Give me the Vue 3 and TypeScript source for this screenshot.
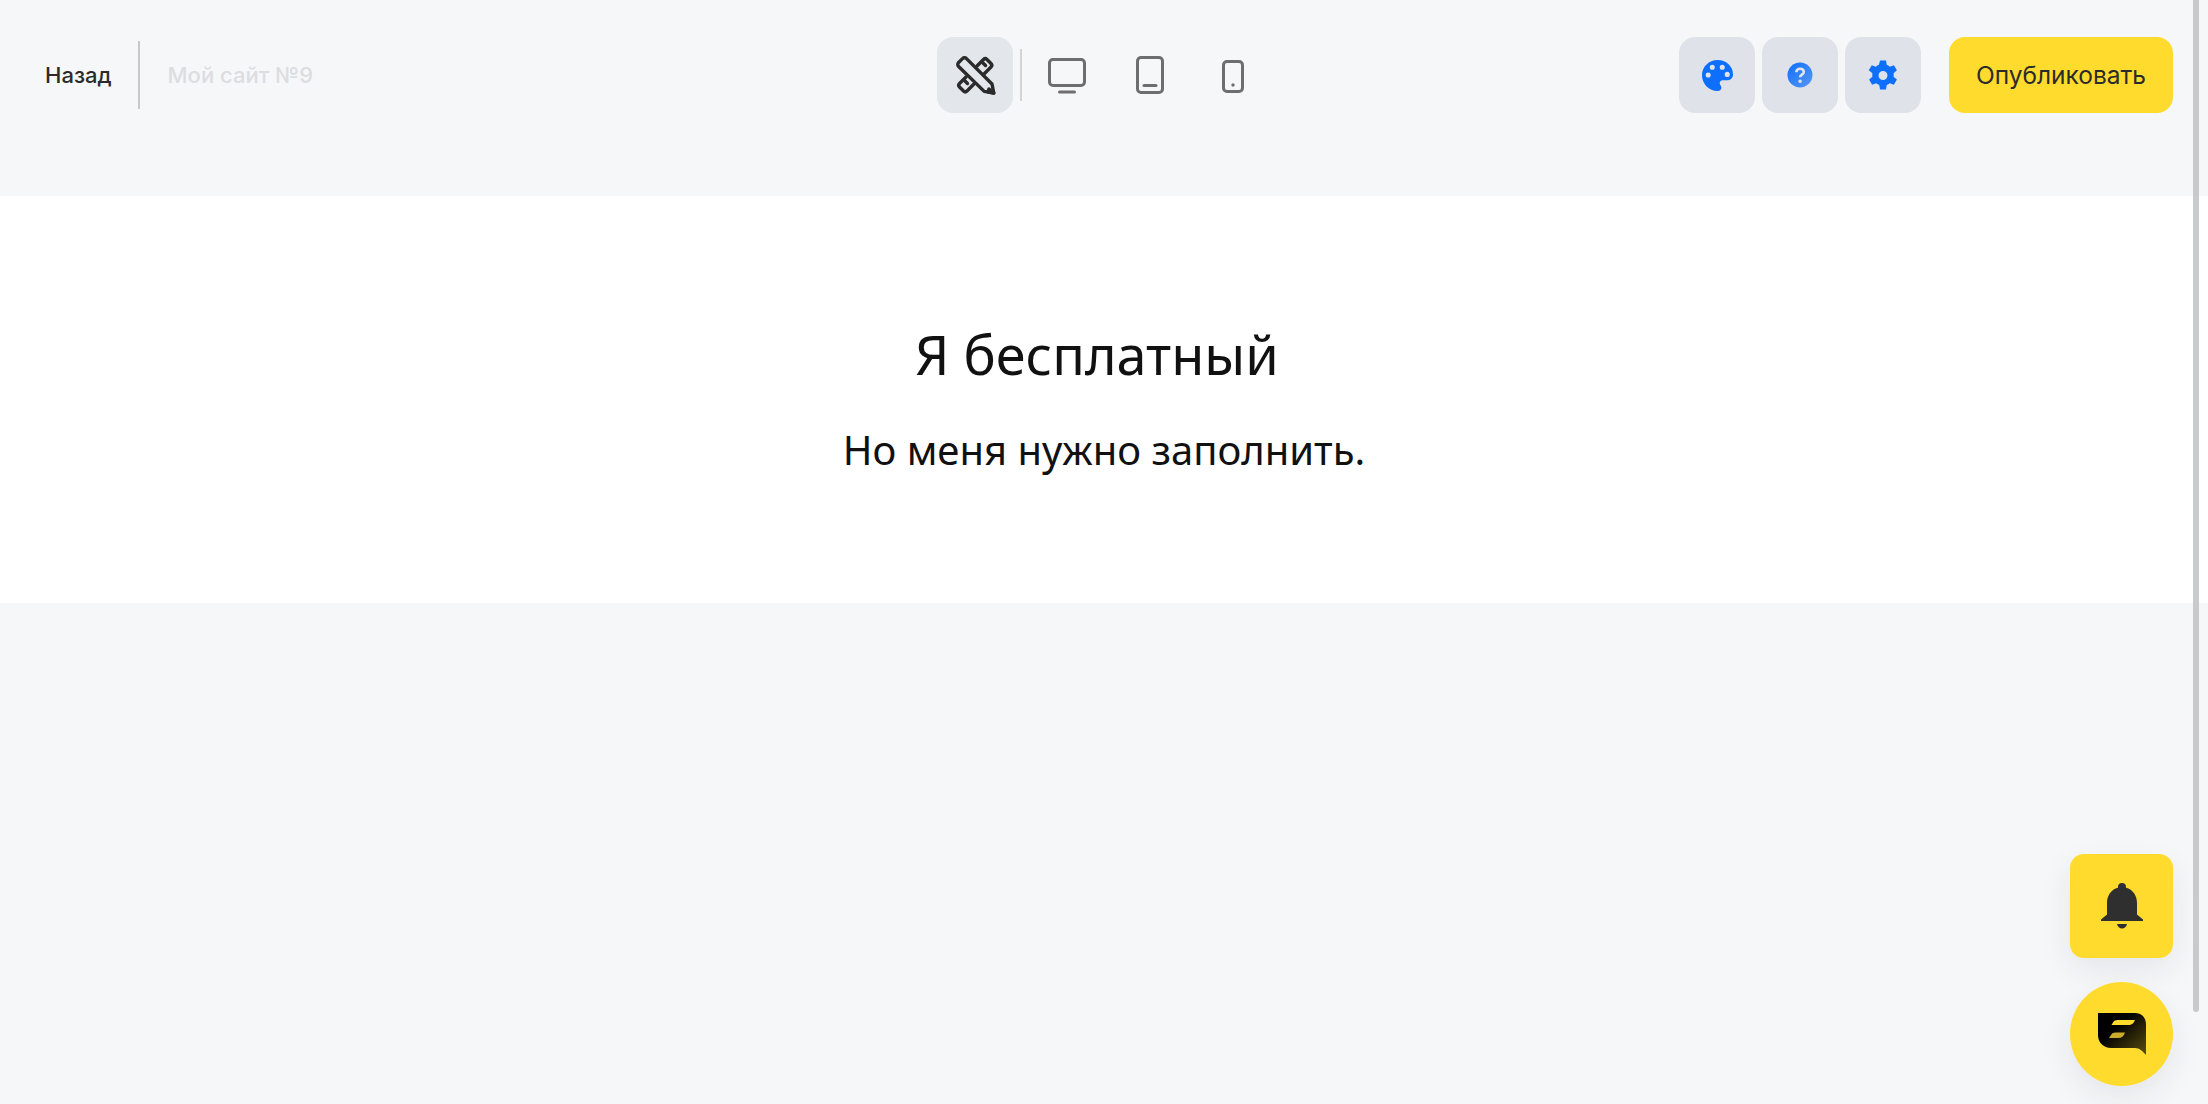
<script setup lang="ts">
const devices = ['desktop', 'tablet', 'phone']
</script>

<template>
  <div class="page">
    <header class="topbar">
      <div class="left">
        <a class="back">Назад</a>
        <span class="site-name">Мой сайт №9</span>
      </div>

      <div class="center">
        <button class="tool active" aria-label="Редактор">
          <svg width="44" height="44" viewBox="0 0 44 44" fill="none" stroke="#2b2b2b" stroke-width="3.400" stroke-linejoin="round" stroke-linecap="round">
            <path d="M5.600 9.500l3.900-3.900a2.800 2.800 0 0 1 4 0L39 31l1.800 9.100-9.600-1.700L5.600 13.500a2.800 2.800 0 0 1 0-4z" />
            <path d="M24 13l6.500-6.500a2.500 2.500 0 0 1 3.500 0l4 4a2.500 2.500 0 0 1 0 3.500L31.500 20.500" />
            <path d="M13 24l-6.500 6.500a2.500 2.500 0 0 0 0 3.500l4 4a2.500 2.500 0 0 0 3.500 0L20.500 31.500" />
            <path d="M30 10l2.500 2.500M12 28l2.500 2.500" />
            <path d="M36 36l4.800 4.100-6-1.200z" fill="#2b2b2b" />
          </svg>
        </button>
        <span class="tool-sep"></span>
        <button v-for="d in devices" :key="d" class="tool" :aria-label="d">
          <svg v-if="d === 'desktop'" width="40" height="38" viewBox="0 0 40 38" fill="none" stroke="#6e6e6e" stroke-width="3">
            <rect x="2.500" y="3.500" width="35" height="26" rx="3.500" />
            <path d="M12.500 36h15" stroke-linecap="round" />
          </svg>
          <svg v-else-if="d === 'tablet'" width="28" height="38" viewBox="0 0 28 38" fill="none" stroke="#6e6e6e" stroke-width="3">
            <rect x="1.500" y="1.500" width="25" height="35" rx="3.500" />
            <path d="M8 29.500h12" stroke-linecap="round" />
          </svg>
          <svg v-else width="22" height="33" viewBox="0 0 22 33" fill="none" stroke="#6e6e6e" stroke-width="3" class="phone">
            <rect x="1.500" y="1.500" width="19" height="30" rx="3.500" />
            <circle cx="11" cy="25" r="1.700" fill="#6e6e6e" stroke="none" />
          </svg>
        </button>
      </div>

      <div class="right">
        <button class="square" aria-label="Оформление">
          <svg width="31" height="31" viewBox="0 0 28 28">
            <path fill="#0d6ffb" fill-rule="evenodd" d="M14 0C6.300 0 0 6 0 13.700 0 21.500 6.300 28 14 28c2.300 0 3.500-1.400 3.500-3 0-1.900-1.500-2.400-1.500-4 0-1.500 1.100-2.600 2.800-2.600h3.400c3.400 0 5.800-2.200 5.800-5.400C28 5.400 21.600 0 14 0zM5.600 15.800a2.300 2.300 0 1 1 0-4.600 2.300 2.300 0 0 1 0 4.600zM9.300 8.800a2.300 2.300 0 1 1 0-4.600 2.300 2.300 0 0 1 0 4.600zM18.300 8.800a2.300 2.300 0 1 1 0-4.600 2.300 2.300 0 0 1 0 4.600zM22.800 15.300a2.300 2.300 0 1 1 0-4.600 2.300 2.300 0 0 1 0 4.600z" />
          </svg>
        </button>
        <button class="square" aria-label="Помощь">
          <svg width="26" height="26" viewBox="0 0 26 26">
            <defs>
              <linearGradient id="helpFill" x1="0" y1="0" x2="1" y2="1">
                <stop offset="0" stop-color="#0d6ffb" />
                <stop offset="1" stop-color="#5a97f5" />
              </linearGradient>
            </defs>
            <circle cx="13" cy="13" r="12.500" fill="url(#helpFill)" />
            <path d="M9.300 10.200c0-2.200 1.700-3.500 3.800-3.500s3.700 1.200 3.700 3.200c0 2.700-3.700 2.800-3.700 5.400" fill="none" stroke="#e0e4ea" stroke-width="2.600" />
            <circle cx="13.100" cy="19.300" r="1.700" fill="#e0e4ea" />
          </svg>
        </button>
        <button class="square" aria-label="Настройки">
          <svg width="30" height="31" viewBox="0 0 28 29">
            <path fill="#0d6ffb" fill-rule="evenodd" d="M11.200 0h5.600l.7 4a10.500 10.500 0 0 1 2.900 1.700l3.800-1.400 2.800 4.900-3.100 2.600a10.500 10.500 0 0 1 0 3.400l3.100 2.600-2.800 4.900-3.800-1.400a10.500 10.500 0 0 1-2.900 1.700l-.7 4h-5.600l-.7-4a10.500 10.500 0 0 1-2.900-1.700l-3.800 1.400-2.800-4.900 3.100-2.600a10.500 10.500 0 0 1 0-3.400L.7 9.200l2.800-4.900 3.800 1.400A10.500 10.500 0 0 1 10.200 4zM14 9.800a4.200 4.200 0 1 0 0 8.400 4.200 4.200 0 0 0 0-8.400z" transform="translate(0 .5)" />
          </svg>
        </button>
        <button class="publish">Опубликовать</button>
      </div>
    </header>

    <section class="hero">
      <h1>Я бесплатный</h1>
      <p>Но меня нужно заполнить.</p>
    </section>

    <div class="floating">
      <button class="fab bell" aria-label="Уведомления">
        <svg width="44" height="46" viewBox="0 0 44 46">
          <path fill="#2f2f2f" d="M22 0a4 4 0 0 1 4 4v.700C33 6.500 37 12.500 37 20v11.500l6 5v1.500H1v-1.500l6-5V20C7 12.500 11 6.500 18 4.700V4a4 4 0 0 1 4-4z" />
          <path fill="#2f2f2f" d="M17 41h10c-.6 2.800-2.600 4.500-5 4.500s-4.400-1.700-5-4.500z" />
        </svg>
      </button>
      <button class="fab chat" aria-label="Чат">
        <svg width="48" height="42" viewBox="0 0 48 42">
          <defs>
            <linearGradient id="chatFill" x1="0.350" y1="0.350" x2="1" y2="1">
              <stop offset="0" stop-color="#000" />
              <stop offset="1" stop-color="#5c4f10" />
            </linearGradient>
          </defs>
          <path fill="url(#chatFill)" d="M0 0h37c6.500 0 11 4.500 11 11v31c-3-3.500-6.500-7-11-7H13C5.500 35 0 29.500 0 22z" />
          <path fill="#ffdb2d" d="M15 9.500c1-1.800 2.500-2.500 4.500-2.500H37c-1.200 3-3 5-7 5H13.500z" />
          <path fill="#c9ab2b" d="M13 19c1-1.800 2.500-2.500 4.500-2.500H27c-1 3.500-3 5.500-6.500 5.500H11z" transform="translate(0 3)" />
        </svg>
      </button>
    </div>

    <div class="scroll-thumb"></div>
  </div>
</template>

<style>
html,
body {
  margin: 0;
  overflow: hidden;
  background: #f6f7f9;
}
</style>

<style scoped>
.page {
  position: relative;
  height: 1104px;
  background: #f6f7f9;
  font-family: Inter, "Liberation Sans", sans-serif;
}

button {
  padding: 0;
  border: 0;
  background: none;
  font-family: inherit;
  cursor: pointer;
}

.topbar {
  display: grid;
  grid-template-columns: 1fr auto 1fr;
  align-items: start;
  height: 196px;
  padding: 37px 35px 0 45px;
  box-sizing: border-box;
}

.left {
  display: flex;
  align-items: center;
  height: 76px;
}

.back {
  padding-right: 26px;
  font-size: 22px;
  font-weight: 500;
  color: #2b2b2b;
}

.site-name {
  display: flex;
  align-items: center;
  height: 68px;
  padding-left: 28px;
  border-left: 2px solid #c8c9cc;
  font-size: 22px;
  font-weight: 500;
  color: #dcdde0;
}

.center {
  display: flex;
  align-items: center;
  gap: 7px;
  margin-left: -10px;
}

.tool {
  display: flex;
  align-items: center;
  justify-content: center;
  width: 76px;
  height: 76px;
  border-radius: 16px;
}

.tool.active {
  background: #e3e7ec;
}

.tool-sep {
  width: 2px;
  height: 52px;
  background: #d2d4d8;
}

.phone {
  margin-top: 2px;
}

.right {
  display: flex;
  justify-content: flex-end;
  gap: 7px;
}

.square {
  display: flex;
  align-items: center;
  justify-content: center;
  width: 76px;
  height: 76px;
  border-radius: 16px;
  background: #dfe3e9;
}

.publish {
  width: 224px;
  height: 76px;
  margin-left: 21px;
  border-radius: 16px;
  background: #ffdb2d;
  font-size: 24.500px;
  color: #2b2b2b;
}

.hero {
  display: flex;
  flex-direction: column;
  align-items: center;
  height: 407px;
  padding-top: 125px;
  box-sizing: border-box;
  background: #fff;
  font-family: "Noto Sans", sans-serif;
  color: #111;
}

h1 {
  margin: 0;
  padding-right: 14px;
  font-size: 54px;
  font-weight: 400;
  line-height: 66px;
}

p {
  margin: 37px 0 0;
  font-size: 40px;
  font-weight: 400;
  line-height: 52px;
}

.floating {
  position: fixed;
  right: 35px;
  bottom: 18px;
  display: flex;
  flex-direction: column;
  gap: 24px;
}

.fab {
  display: flex;
  align-items: center;
  justify-content: center;
  width: 103px;
  height: 104px;
  background: #ffdb2d;
  box-shadow: 0 12px 32px rgba(40, 40, 50, 0.08);
}

.bell {
  border-radius: 14px;
}

.chat {
  border-radius: 50%;
}

.scroll-thumb {
  position: fixed;
  top: 0;
  right: 9px;
  width: 6px;
  height: 1012px;
  border-radius: 0 0 3px 3px;
  background: #c9cacc;
}
</style>
